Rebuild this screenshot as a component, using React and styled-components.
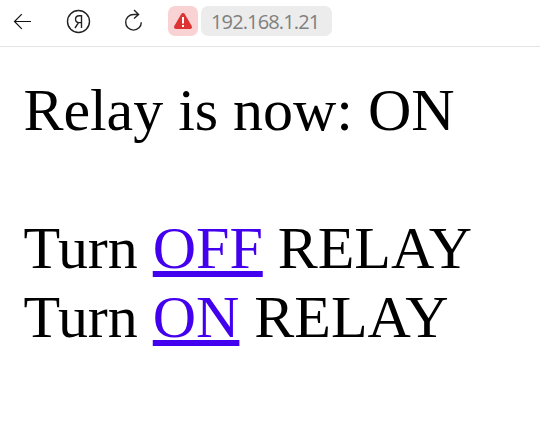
import React from "react";
import styled, { createGlobalStyle } from "styled-components";

const GlobalStyle = createGlobalStyle`
  *{box-sizing:border-box}
  body{margin:0;background:#fff;overflow:hidden}
`;
const Window = styled.div`
  width:540px;height:431px;display:flex;flex-direction:column;background:#fff;
`;
const Toolbar = styled.header`
  height:47px;flex:none;display:flex;align-items:flex-start;padding:6px 0 0 7px;
  border-bottom:1px solid #e4e4e4;
`;
const IconButton = styled.button`
  width:32px;height:31px;padding:0;border:0;background:none;display:flex;
  align-items:center;justify-content:center;margin-right:${p => p.$gap}px;
`;
const Warning = styled(IconButton)`
  width:30px;height:30px;border-radius:7px;background:#f9d3d3;margin-right:3px;
`;
const Address = styled.div`
  width:131px;height:30px;border-radius:7px;background:#ececec;color:#808080;
  font:20px/32px "Open Sans","Noto Sans",sans-serif;letter-spacing:-.86px;
  padding-left:10px;white-space:nowrap;
`;
const Page = styled.main`
  padding:29px 0 0 23.4px;color:#000;
  font:60px/69px "Liberation Serif","Times New Roman",serif;
  letter-spacing:-.03px;
`;
const Line = styled.div`
  height:69px;white-space:pre;
`;
const Link = styled.a`
  color:#4300ee;text-decoration:underline;text-decoration-thickness:6px;
`;

export default function App() {
  return (
    <Window>
      <GlobalStyle />
      <Toolbar>
        <IconButton $gap={23} aria-label="Back">
          <svg width="32" height="31" fill="none" stroke="#111" strokeWidth="1.2"><path d="M7.5 15.5H24M14.8 8.2L7.5 15.5L14.8 22.8" /></svg>
        </IconButton>
        <IconButton $gap={23} aria-label="Yandex">
          <svg width="32" height="31" fill="none" stroke="#222" strokeWidth="1.4"><circle cx="16.5" cy="15.5" r="11" /><path d="M19.5 22V9.7h-2.3c-4.8 0-4.8 6.9-.6 6.9H19.5M16.5 16.6L13 22" /></svg>
        </IconButton>
        <IconButton $gap={19} aria-label="Reload">
          <svg width="32" height="31" fill="none" stroke="#222" strokeWidth="1.4"><path d="M24.3 16.3A7.8 7.8 0 1 1 16.5 8.5H21.5M17 4L21.6 8.5L17 12.6" /></svg>
        </IconButton>
        <Warning aria-label="Not secure">
          <svg width="30" height="30"><path d="M15 9L22 21H8Z" fill="#dc3333" stroke="#dc3333" strokeWidth="4" strokeLinejoin="round" /><path d="M15 11v6.5M15 19v2" stroke="#fff" strokeWidth="2" /></svg>
        </Warning>
        <Address>192.168.1.21</Address>
      </Toolbar>
      <Page>
        <Line>Relay is now: ON</Line>
        <Line />
        <Line>Turn <Link href="#off">OFF</Link> RELAY</Line>
        <Line>Turn <Link href="#on">ON</Link> RELAY</Line>
      </Page>
    </Window>
  );
}
